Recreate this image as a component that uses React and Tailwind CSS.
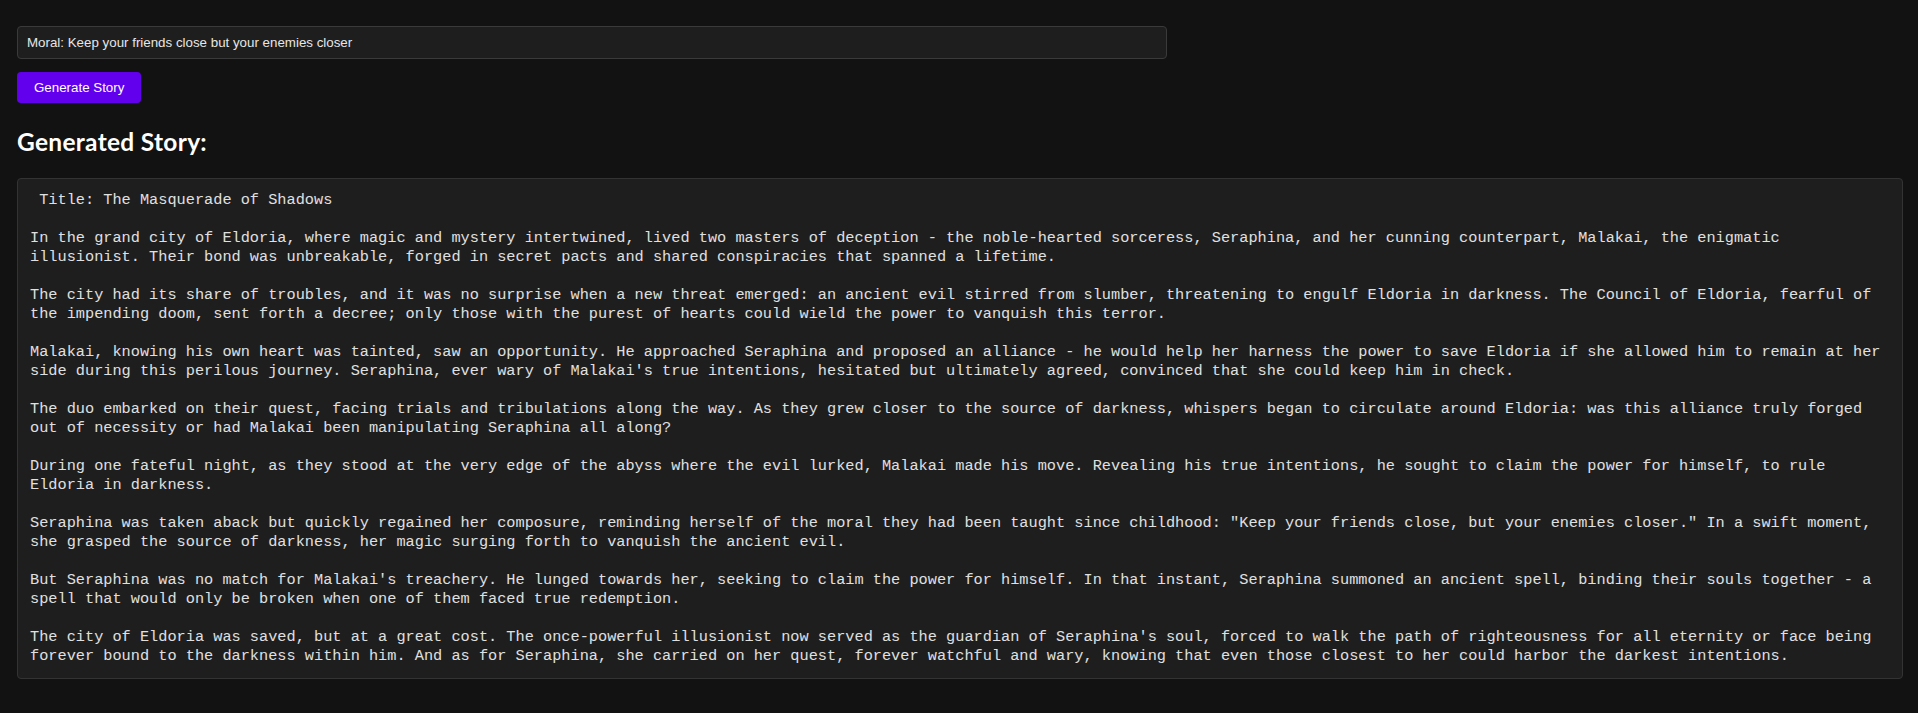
import React from "react";

const paragraphs = [
  [" Title: The Masquerade of Shadows"],
  [
    "In the grand city of Eldoria, where magic and mystery intertwined, lived two masters of deception - the noble-hearted sorceress, Seraphina, and her cunning counterpart, Malakai, the enigmatic",
    "illusionist. Their bond was unbreakable, forged in secret pacts and shared conspiracies that spanned a lifetime.",
  ],
  [
    "The city had its share of troubles, and it was no surprise when a new threat emerged: an ancient evil stirred from slumber, threatening to engulf Eldoria in darkness. The Council of Eldoria, fearful of",
    "the impending doom, sent forth a decree; only those with the purest of hearts could wield the power to vanquish this terror.",
  ],
  [
    "Malakai, knowing his own heart was tainted, saw an opportunity. He approached Seraphina and proposed an alliance - he would help her harness the power to save Eldoria if she allowed him to remain at her",
    "side during this perilous journey. Seraphina, ever wary of Malakai's true intentions, hesitated but ultimately agreed, convinced that she could keep him in check.",
  ],
  [
    "The duo embarked on their quest, facing trials and tribulations along the way. As they grew closer to the source of darkness, whispers began to circulate around Eldoria: was this alliance truly forged",
    "out of necessity or had Malakai been manipulating Seraphina all along?",
  ],
  [
    "During one fateful night, as they stood at the very edge of the abyss where the evil lurked, Malakai made his move. Revealing his true intentions, he sought to claim the power for himself, to rule",
    "Eldoria in darkness.",
  ],
  [
    "Seraphina was taken aback but quickly regained her composure, reminding herself of the moral they had been taught since childhood: \"Keep your friends close, but your enemies closer.\" In a swift moment,",
    "she grasped the source of darkness, her magic surging forth to vanquish the ancient evil.",
  ],
  [
    "But Seraphina was no match for Malakai's treachery. He lunged towards her, seeking to claim the power for himself. In that instant, Seraphina summoned an ancient spell, binding their souls together - a",
    "spell that would only be broken when one of them faced true redemption.",
  ],
  [
    "The city of Eldoria was saved, but at a great cost. The once-powerful illusionist now served as the guardian of Seraphina's soul, forced to walk the path of righteousness for all eternity or face being",
    "forever bound to the darkness within him. And as for Seraphina, she carried on her quest, forever watchful and wary, knowing that even those closest to her could harbor the darkest intentions.",
  ],
];

export default function App() {
  return (
    <div className="min-h-[713px] w-full bg-[#121212] pt-[26px] pl-[17px] pr-[15px] pb-[34px]">
      <div className="flex h-[33px] w-[1150px] items-center rounded-[4px] border border-[#3a3a3a] bg-[#1e1e1e] pl-[9px] text-[13.33px] text-[#e6e6e6] [font-family:'Liberation_Sans',Arial,sans-serif]">
        Moral: Keep your friends close but your enemies closer
      </div>
      <button className="mt-[13px] flex h-[31px] items-center rounded-[4px] bg-[#6200ee] px-[17px] text-[13.33px] text-white [font-family:'Liberation_Sans',Arial,sans-serif]">
        Generate Story
      </button>
      <h2 className="mt-[24px] text-[24.5px] leading-[29px] font-bold tracking-[0.3px] text-white [font-family:Lato,'Open_Sans',sans-serif]">
        Generated Story:
      </h2>
      <div className="mt-[22px] rounded-[4px] border border-[#333333] bg-[#1e1e1e] p-[12px] text-[15.28px] leading-[19px] text-[#e0e0e0] [font-family:'Liberation_Mono','DejaVu_Sans_Mono',monospace]">
        {paragraphs.map((lines, i) => (
          <div key={i} className={i > 0 ? "mt-[19px]" : ""}>
            {lines.map((line, j) => (
              <div key={j} className="whitespace-pre">
                {line}
              </div>
            ))}
          </div>
        ))}
      </div>
    </div>
  );
}
